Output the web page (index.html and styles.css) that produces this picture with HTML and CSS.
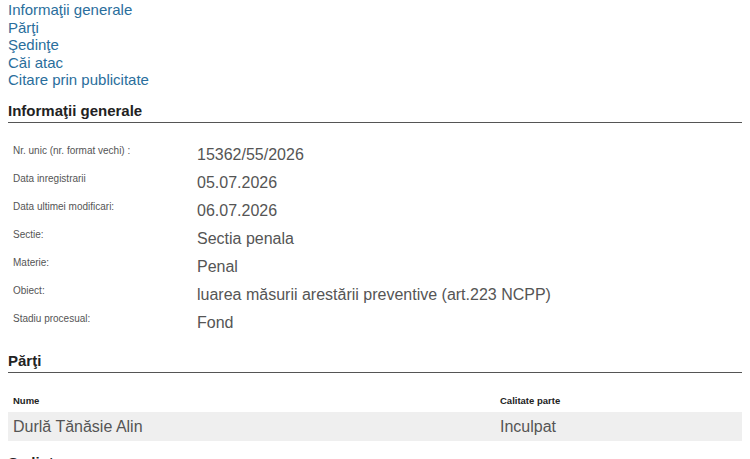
FILE: index.html
```html
<!DOCTYPE html>
<html lang="ro">
  <head>
    <meta charset="UTF-8" />
    <title>Dosar 15362/55/2026</title>
    <link rel="stylesheet" href="styles.css">
  </head>
  <body>
    <nav class="cuprins">
      <a href="#info">Informaţii generale</a>
      <a href="#parti">Părţi</a>
      <a href="#sedinte">Şedinţe</a>
      <a href="#cai">Căi atac</a>
      <a href="#citare">Citare prin publicitate</a>
    </nav>

    <h2 id="info">Informaţii generale</h2>
    <div class="detalii">
      <div class="eticheta">Nr. unic (nr. format vechi) :</div>
      <div class="valoare">15362/55/2026</div>
      <div class="eticheta">Data inregistrarii</div>
      <div class="valoare">05.07.2026</div>
      <div class="eticheta">Data ultimei modificari:</div>
      <div class="valoare">06.07.2026</div>
      <div class="eticheta">Sectie:</div>
      <div class="valoare">Sectia penala</div>
      <div class="eticheta">Materie:</div>
      <div class="valoare">Penal</div>
      <div class="eticheta">Obiect:</div>
      <div class="valoare">luarea măsurii arestării preventive (art.223 NCPP)</div>
      <div class="eticheta">Stadiu procesual:</div>
      <div class="valoare">Fond</div>
    </div>

    <h2 id="parti">Părţi</h2>
    <table class="tabel">
      <thead>
        <tr><th>Nume</th><th class="col2">Calitate parte</th></tr>
      </thead>
      <tbody>
        <tr><td>Durlă Tănăsie Alin</td><td>Inculpat</td></tr>
      </tbody>
    </table>

    <h2 id="sedinte">Şedinţe</h2>
  </body>
</html>
```

FILE: styles.css
```css
* {
  padding: 0;
  margin: 0;
  box-sizing: border-box;
}

body {
  margin: 0 8px;
  font-family: "Liberation Sans", Arial, sans-serif;
  background: #fff;
}

/* cuprins */

.cuprins {
  display: flex;
  flex-direction: column;
  padding-top: 1px;
}

.cuprins a {
  color: #2a6e9c;
  text-decoration: none;
  font-size: 15px;
  line-height: 17.5px;
}

h2 {
  font-size: 15px;
  font-weight: bold;
  color: #222;
  margin-top: 13px;
  padding-bottom: 3px;
  border-bottom: 1px solid #555;
}

/* informatii generale */

.detalii {
  display: grid;
  grid-template-columns: 189px 1fr;
  grid-auto-rows: 28px;
  padding-top: 19px;
  padding-bottom: 1px;
}

.eticheta {
  font-size: 10px;
  color: #555;
  padding-left: 5px;
  padding-top: 3px;
}

.valoare {
  font-size: 16px;
  color: #555;
  padding-top: 4px;
}

/* parti */

.tabel {
  width: 100%;
  border-collapse: collapse;
  margin-top: 22px;
}

.tabel th {
  text-align: left;
  font-size: 9.5px;
  color: #222;
  padding: 0 5px 6px;
}

.tabel th.col2 {
  width: 247px;
}

.tabel td {
  background: #efefef;
  font-size: 16px;
  color: #555;
  padding: 6px 5px 5px;
  height: 28px;
}
```
